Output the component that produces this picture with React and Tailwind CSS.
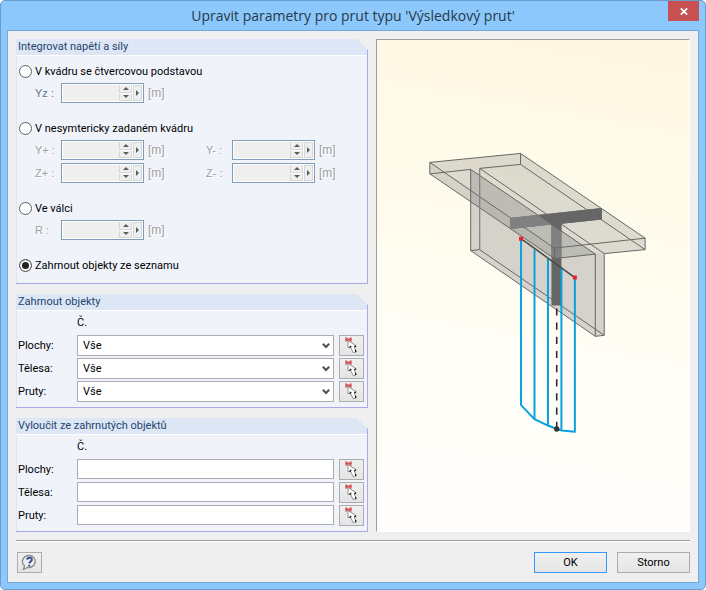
import React from "react";

function Panel({ title, className, children }) {
  return (
    <section className="border-r border-b border-[#aaa8e8] bg-[#f0f4fa] [clip-path:polygon(0_0,calc(100%-11px)_0,100%_11px,100%_100%,0_100%)]">
      <h2 className="h-[17px] border-b border-white bg-[#dce6f5] pl-0.5 text-[11px] leading-4 text-[#1f456e]">{title}</h2>
      <div className={"border-l border-[#dce6f5] " + className}>{children}</div>
    </section>
  );
}

function Radio({ id, label, checked }) {
  return (
    <div className="flex h-[21px] items-center gap-[3px] pl-0.5">
      <input
        type="radio"
        name="integration"
        id={id}
        defaultChecked={checked}
        className="size-[13px] appearance-none rounded-full border border-[#606060] bg-white checked:bg-[#222] checked:shadow-[inset_0_0_0_2px_white]"
      />
      <label htmlFor={id}>{label}</label>
    </div>
  );
}

function Spin({ id, label, strong }) {
  return (
    <div className="flex w-[171px] items-center text-[#a0a0a0] [text-shadow:1px_1px_0_white]">
      <label htmlFor={id} className={"w-[26px] font-['Liberation_Sans',sans-serif] " + (strong ? "text-[#5f6f88]" : "")}>
        {label}
      </label>
      <div className="flex h-5 w-[83px] border border-[#7f9db9] bg-white p-px">
        <input id={id} disabled className="min-w-0 flex-1 bg-[#efefef]" />
        <div className="mr-px flex w-[13px] flex-col gap-px">
          <button type="button" disabled aria-label="Zvýšit" className="flex flex-1 items-center justify-center border-x border-b border-[#d6d6d6] bg-[#efefef]">
            <svg width="6" height="3" viewBox="0 0 6 3"><path d="M0 3L3 0L6 3Z" fill="#5c5c5c" /></svg>
          </button>
          <button type="button" disabled aria-label="Snížit" className="flex flex-1 items-center justify-center border-x border-b border-[#d6d6d6] bg-[#efefef]">
            <svg width="6" height="3" viewBox="0 0 6 3"><path d="M0 0L3 3L6 0Z" fill="#5c5c5c" /></svg>
          </button>
        </div>
        <button type="button" disabled aria-label="Vybrat hodnotu" className="flex w-[9px] items-center justify-center border border-[#d6d6d6] bg-[#efefef]">
          <svg width="3" height="6" viewBox="0 0 3 6"><path d="M0 0L3 3L0 6Z" fill="#5c5c5c" /></svg>
        </button>
      </div>
      <span className="pl-1 font-['Liberation_Sans',sans-serif] text-[12px]">[m]</span>
    </div>
  );
}

function PickButton({ label }) {
  return (
    <button type="button" aria-label={label} className="h-[21px] w-[25px] border border-[#acacac] bg-gradient-to-b from-[#f0f0f0] to-[#e4e4e4]">
      <svg width="23" height="19" viewBox="1 1 23 19" className="block">
        <path d="M6.5 2.5L12.5 6.5M6.5 6.5L12.5 2.5M6 4.5H13" fill="none" stroke="#d65a5a" strokeWidth="1.3" />
        <path d="M9 5.5V12.6L11.4 12L14.2 17.6L17 17L15.4 11.8L17.2 10.8Z" fill="#fff" stroke="#777" strokeWidth="0.8" />
        <path d="M10.6 12.6L12.2 11M15.4 12L17 10.8M16.4 14.8L17 17" stroke="#111" strokeWidth="1.2" fill="none" />
      </svg>
    </button>
  );
}

const kinds = ["Plochy", "Tělesa", "Pruty"];

function ObjectRows({ group, withList }) {
  return (
    <>
      <div className="flex h-6 items-center pl-[60px]">Č.</div>
      <div className="flex flex-col gap-0.5">
        {kinds.map((kind) => (
          <div key={kind} className="flex items-center pr-[3px] pl-px">
            <label htmlFor={group + kind} className="w-[59px]">{kind}:</label>
            {withList ? (
              <div className="relative mr-[5px] h-[21px] flex-1">
                <select id={group + kind} className="h-full w-full appearance-none border border-[#abadb3] bg-white pl-[5px]">
                  <option>Vše</option>
                </select>
                <svg width="8" height="6" viewBox="0 0 8 6" className="pointer-events-none absolute top-2 right-1">
                  <path d="M0.8 0.8L4 4L7.2 0.8" fill="none" stroke="#505050" strokeWidth="2" />
                </svg>
              </div>
            ) : (
              <input id={group + kind} type="text" className="mr-[5px] h-5 min-w-0 flex-1 self-start border border-[#abadb3] bg-white px-1" />
            )}
            <PickButton label={"Vybrat: " + kind} />
          </div>
        ))}
      </div>
    </>
  );
}

function BeamDrawing() {
  return (
    <svg viewBox="376.5 39.5 313 491" className="block h-full w-full" role="img" aria-label="Výsledkový prut">
      <path d="M429.5 161.5L520.5 152.5L645.5 237.5V249L554.5 258L429.5 173Z" fill="#808080" fillOpacity="0.27" />
      <path d="M429.5 161.5L554.5 247.5V258L429.5 173Z" fill="#808080" fillOpacity="0.08" />
      <path d="M470.5 168.5L595.5 253.5L604.5 253V335L595.5 336L470.5 250Z" fill="#808080" fillOpacity="0.34" />
      <path d="M510 217.3L602 207.3V218.7L561.5 223V305H551.5V223.7L510 228.3Z" fill="#666" />
      <path d="M510 217.3L537.5 214.3L551.5 223.7L510 228.3Z" fill="#808080" />
      <path d="M551.5 223.7L561.5 231V257.3L554.5 258L551.5 256Z" fill="#808080" />
      <g fill="none" stroke="#666" strokeWidth="1">
        <path d="M429.5 161.5L520.5 152.5V163.5L479.5 167.5M470.5 168.5L429.5 173V161.5L554.5 247.5L645.5 237.5V249L604.5 253M595.5 253.5L554.5 258V247.5" />
        <path d="M520.5 152.5L645.5 237.5M520.5 163.5L645.5 249M429.5 173L554.5 258" />
        <path d="M470.5 168.5L595.5 253.5V336L470.5 250ZM470.5 250L479.5 249L604.5 335L595.5 336" />
        <path d="M479.5 167.5L604.5 253" />
        <path d="M479.5 167.5V249M604.5 253V335" stroke="#858585" strokeWidth="1.3" />
      </g>
      <path d="M510 217.3L602 207.3V218.7L561.5 223V231L551.5 223.7L537.5 214.3Z" fill="#666" />
      <path d="M510 217.3L537.5 214.3L551.5 223.7L510 228.3Z" fill="#808080" />
      <path d="M521 405L534.5 419L548 425.5L557 429L562 430.5L575 431.7" fill="none" stroke="#08a0df" strokeWidth="2" />
      <path d="M521 239V405.5M534.5 249V419M548 258V426M561.5 267V430M575 278V432.5" stroke="#08a0df" strokeWidth="2" />
      <path d="M521 238L575 277" stroke="#484848" strokeWidth="1.5" />
      <path d="M556.8 308V429" stroke="#2c2c2c" strokeWidth="1.6" strokeDasharray="7.2 7" />
      <circle cx="556.8" cy="429" r="2.7" fill="#333" />
      <path d="M519 236H523V240H519ZM573 275H577V279H573Z" fill="#e8202c" />
    </svg>
  );
}

export default function App() {
  return (
    <main className="flex flex-col rounded-[5px] border border-[#6c9cc8] bg-[#8cc8fb] px-1.5 pb-1.5 font-[Roboto,sans-serif] text-[11px] leading-4 text-black">
      <header className="relative flex h-[29px] items-center justify-center">
        <h1 className="font-['Open_Sans',sans-serif] text-[14px] text-[#26384a]">Upravit parametry pro prut typu 'Výsledkový prut'</h1>
        <button type="button" aria-label="Zavřít" className="absolute top-0 right-0 flex h-5 w-[31px] items-center justify-center bg-[#c75050]">
          <svg width="8" height="7" viewBox="0 0 8 7"><path d="M0.8 0.3L7.2 6.7M7.2 0.3L0.8 6.7" stroke="#fff" strokeWidth="1.7" /></svg>
        </button>
      </header>
      <form onSubmit={(e) => e.preventDefault()} className="border border-[#74a8d8] bg-[#efefef] px-2 pt-2 pb-[9px]">
        <div className="flex gap-2">
          <div className="flex w-[352px] flex-col gap-2.5">
            <Panel title="Integrovat napětí a síly" className="flex flex-col gap-[15px] pt-[5px] pb-[7px]">
              <div>
                <Radio id="cube" label="V kvádru se čtvercovou podstavou" />
                <div className="mt-px pl-[18px]"><Spin id="yz" label="Yz :" strong /></div>
              </div>
              <div>
                <Radio id="cuboid" label="V nesymtericky zadaném kvádru" />
                <div className="mt-px grid grid-cols-[171px_auto] gap-y-[3px] pl-[18px]">
                  <Spin id="yplus" label="Y+ :" />
                  <Spin id="yminus" label="Y- :" />
                  <Spin id="zplus" label="Z+ :" />
                  <Spin id="zminus" label="Z- :" />
                </div>
              </div>
              <div>
                <Radio id="cylinder" label="Ve válci" />
                <div className="mt-px pl-[18px]"><Spin id="radius" label="R :" /></div>
              </div>
              <Radio id="list" label="Zahrnout objekty ze seznamu" checked />
            </Panel>
            <Panel title="Zahrnout objekty" className="pb-[5px]">
              <ObjectRows group="include" withList />
            </Panel>
            <Panel title="Vyloučit ze zahrnutých objektů" className="pb-[5px]">
              <ObjectRows group="exclude" />
            </Panel>
          </div>
          <div className="relative min-w-0 flex-1 border border-t-[#9c9c9c] border-r-white border-b-white border-l-[#9c9c9c] bg-[linear-gradient(190deg,#fff6e1,#fffbea_30%,#fffdf6_65%,#fffefb)]">
            <div className="absolute inset-0"><BeamDrawing /></div>
          </div>
        </div>
        <hr className="mt-2 h-0.5 border-t border-b border-t-[#9c9c9c] border-b-white" />
        <footer className="mt-2.5 flex items-center gap-2.5">
          <button type="button" aria-label="Nápověda" className="mr-auto ml-px flex h-[21px] w-[25px] items-center justify-center border border-[#acacac] bg-gradient-to-b from-[#f0f0f0] to-[#e5e5e5]">
            <svg width="17" height="17" viewBox="0 0 17 17">
              <path d="M8.5 1.5A6.7 6 0 1 1 6.5 13.5L2.5 15.3L3.5 11.8A6.7 6 0 0 1 8.5 1.5Z" fill="#e9edf5" stroke="#8a8a8a" strokeWidth="1.3" />
              <path d="M6.2 5.6C6.3 3.2 11 3.2 10.8 5.8C10.6 7.5 8.5 7.6 8.4 9.4M8.2 10.8V12.4" fill="none" stroke="#34508f" strokeWidth="2" />
            </svg>
          </button>
          <button type="submit" className="h-[21px] w-[73px] border border-[#3399ff] bg-gradient-to-b from-[#f0f0f0] to-[#e5e5e5]">OK</button>
          <button type="button" className="h-[21px] w-[73px] border border-[#acacac] bg-gradient-to-b from-[#f0f0f0] to-[#e5e5e5]">Storno</button>
        </footer>
      </form>
    </main>
  );
}
